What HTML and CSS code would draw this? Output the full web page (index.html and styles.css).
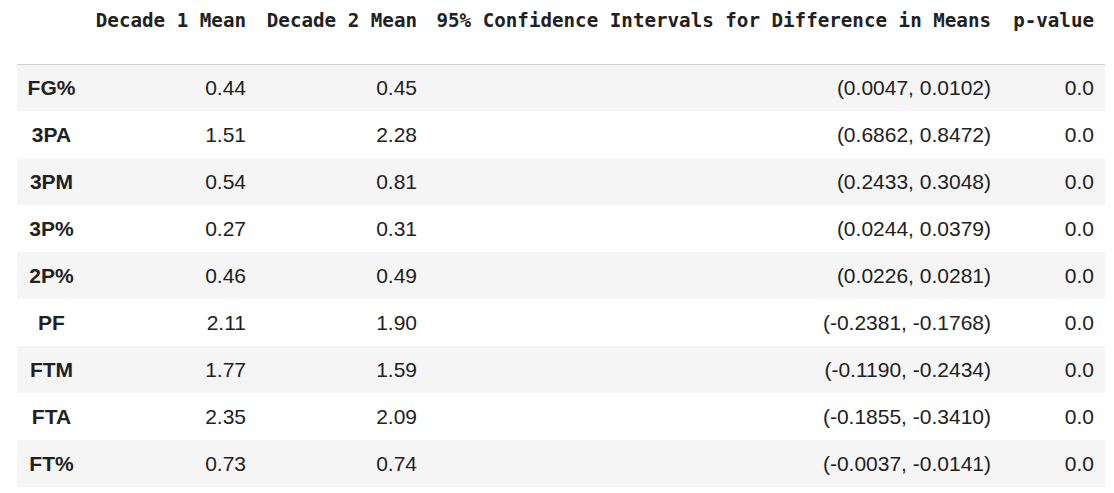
FILE: index.html
```html
<!DOCTYPE html>
<html>
<head>
<meta charset="utf-8">
<link rel="stylesheet" href="styles.css">
</head>
<body>
<div class="wrap">
<table class="df">
  <thead>
    <tr>
      <th class="c-idx"></th>
      <th class="c1">Decade 1 Mean</th>
      <th class="c2">Decade 2 Mean</th>
      <th class="c3">95% Confidence Intervals for Difference in Means</th>
      <th class="c4">p-value</th>
    </tr>
  </thead>
  <tbody>
    <tr><th>FG%</th><td>0.44</td><td>0.45</td><td>(0.0047, 0.0102)</td><td>0.0</td></tr>
    <tr><th>3PA</th><td>1.51</td><td>2.28</td><td>(0.6862, 0.8472)</td><td>0.0</td></tr>
    <tr><th>3PM</th><td>0.54</td><td>0.81</td><td>(0.2433, 0.3048)</td><td>0.0</td></tr>
    <tr><th>3P%</th><td>0.27</td><td>0.31</td><td>(0.0244, 0.0379)</td><td>0.0</td></tr>
    <tr><th>2P%</th><td>0.46</td><td>0.49</td><td>(0.0226, 0.0281)</td><td>0.0</td></tr>
    <tr><th>PF</th><td>2.11</td><td>1.90</td><td>(-0.2381, -0.1768)</td><td>0.0</td></tr>
    <tr><th>FTM</th><td>1.77</td><td>1.59</td><td>(-0.1190, -0.2434)</td><td>0.0</td></tr>
    <tr><th>FTA</th><td>2.35</td><td>2.09</td><td>(-0.1855, -0.3410)</td><td>0.0</td></tr>
    <tr><th>FT%</th><td>0.73</td><td>0.74</td><td>(-0.0037, -0.0141)</td><td>0.0</td></tr>
  </tbody>
</table>
</div>
</body>
</html>
```
FILE: styles.css
```css
html, body {
  margin: 0;
  padding: 0;
  background: #ffffff;
}
.wrap {
  padding: 0 9px 0 17px;
}
.df {
  border-collapse: collapse;
  table-layout: fixed;
  width: 1088px;
  color: #212121;
  font-family: "Liberation Sans", Arial, sans-serif;
  font-size: 21px;
}
.df thead th {
  height: 64px;
  box-sizing: border-box;
  vertical-align: top;
  padding: 9px 11px 0 0;
  text-align: right;
  font-family: "DejaVu Sans Mono", monospace;
  font-weight: bold;
  font-size: 19.2px;
  line-height: 24px;
  white-space: nowrap;
  border-bottom: 1px solid #d2d2d2;
}
.df .c-idx { width: 69px; }
.df .c1 { width: 171px; }
.df .c2 { width: 171px; }
.df .c3 { width: 574px; }
.df .c4 { width: 103px; }
.df tbody tr {
  height: 47px;
}
.df tbody tr:nth-child(odd) {
  background: #f5f5f5;
}
.df tbody th {
  text-align: center;
  font-weight: bold;
  padding: 0;
  vertical-align: middle;
}
.df tbody td {
  text-align: right;
  padding: 0 11px 0 0;
  vertical-align: middle;
  white-space: nowrap;
}
```
